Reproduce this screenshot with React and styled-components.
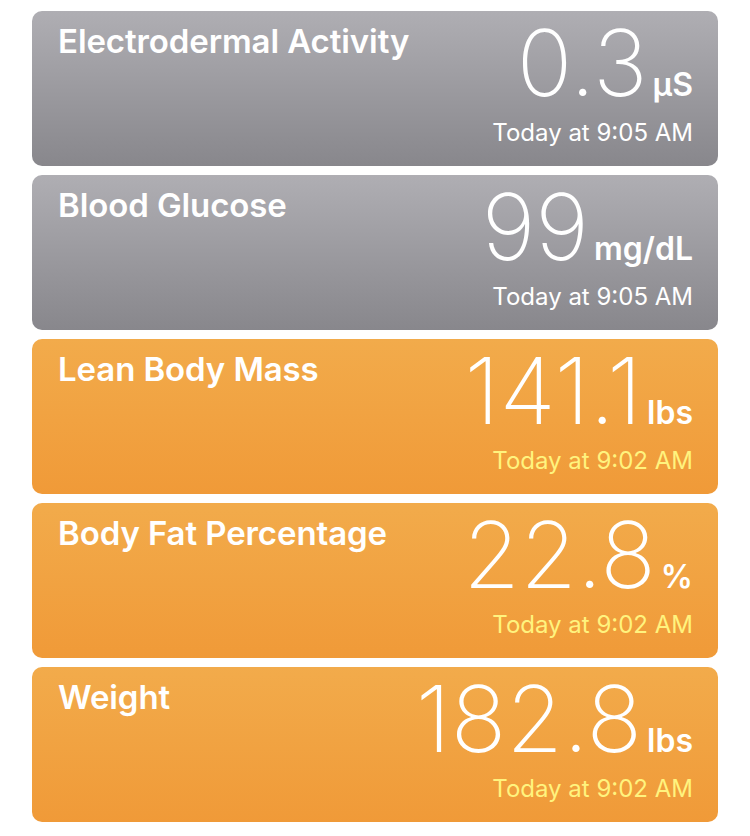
import React from "react";
import styled, { createGlobalStyle } from "styled-components";

const Global = createGlobalStyle`
  html, body { margin: 0; padding: 0; background: #ffffff; }
  body { font-family: Inter, "Noto Sans", "Liberation Sans", sans-serif; -webkit-font-smoothing: antialiased; }
`;

const List = styled.div`
  display: flex;
  flex-direction: column;
  gap: 9px;
  padding: 11px 32px;
  width: 686px;
`;

const Card = styled.div`
  height: 155px;
  box-sizing: border-box;
  border-radius: 10px;
  padding: 0 25px 0 26px;
  display: flex;
  justify-content: space-between;
  align-items: flex-start;
  background: ${(p) =>
    p.$tone === "orange"
      ? "linear-gradient(180deg, #f2ab4b 0%, #f09a38 100%)"
      : "linear-gradient(180deg, #afaeb3 0%, #88878c 100%)"};
`;

const Title = styled.div`
  color: #ffffff;
  font-size: 33px;
  font-weight: 600;
  line-height: 40px;
  margin-top: 10px;
  letter-spacing: -0.1px;
`;

const Right = styled.div`
  display: flex;
  flex-direction: column;
  align-items: flex-end;
`;

const ValueRow = styled.div`
  display: flex;
  align-items: baseline;
  margin-top: 6px;
  line-height: 92px;
  height: 92px;
`;

const Number = styled.span`
  color: #ffffff;
  font-size: 92px;
  font-weight: 200;
`;

const Unit = styled.span`
  color: #ffffff;
  font-size: 32px;
  font-weight: 600;
  margin-left: 5px;
`;

const Time = styled.div`
  color: ${(p) => (p.$tone === "orange" ? "#fff37e" : "#ffffff")};
  font-size: 24px;
  font-weight: 400;
  line-height: 30px;
  margin-top: 9px;
`;

const rows = [
  { title: "Electrodermal Activity", value: "0.3", unit: "µS", time: "Today at 9:05 AM", tone: "gray" },
  { title: "Blood Glucose", value: "99", unit: "mg/dL", time: "Today at 9:05 AM", tone: "gray" },
  { title: "Lean Body Mass", value: "141.1", unit: "lbs", time: "Today at 9:02 AM", tone: "orange" },
  { title: "Body Fat Percentage", value: "22.8", unit: "%", time: "Today at 9:02 AM", tone: "orange" },
  { title: "Weight", value: "182.8", unit: "lbs", time: "Today at 9:02 AM", tone: "orange" },
];

export default function App() {
  return (
    <>
      <Global />
      <List>
        {rows.map((r) => (
          <Card key={r.title} $tone={r.tone}>
            <Title>{r.title}</Title>
            <Right>
              <ValueRow>
                <Number>{r.value}</Number>
                <Unit>{r.unit}</Unit>
              </ValueRow>
              <Time $tone={r.tone}>{r.time}</Time>
            </Right>
          </Card>
        ))}
      </List>
    </>
  );
}
